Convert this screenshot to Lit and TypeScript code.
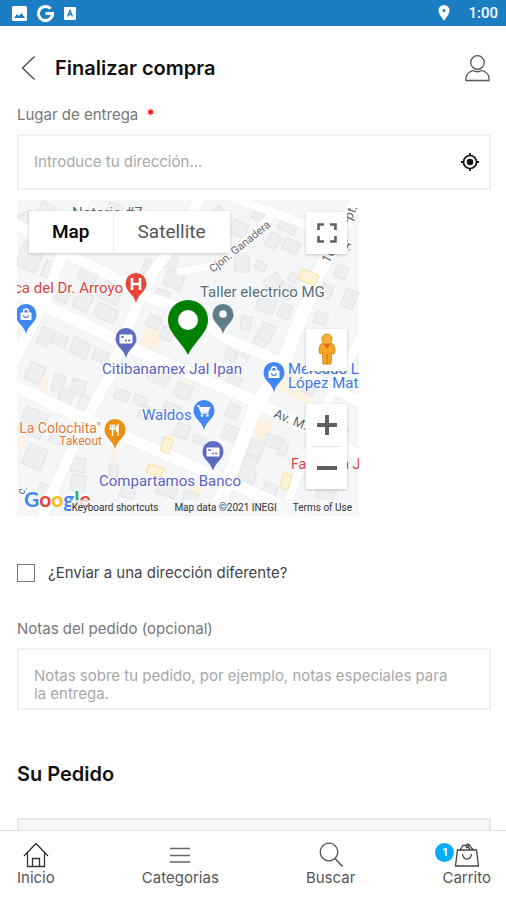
import { LitElement, html, svg, css } from "lit";
import { customElement } from "lit/decorators.js";

const ROADS: [string, number][] = [
  ["M70 -5 L43 60 L26 105 L-5 165", 11],
  ["M-5 90 L60 121 L126 153 L235 200 L347 258", 12],
  ["M-5 22 L50 54 L93 75 L126 95 L173 112 L208 138 L268 164 L347 204", 11],
  ["M185 -5 L160 40 L136 72 L120 105 L103 148 L93 175 L70 218 L34 295 L24 322", 11],
  ["M-5 185 L66 218 L173 265 L248 298 L300 322", 12],
  ["M345 -8 L301 75 L268 158 L238 208 L196 320", 14],
  ["M160 72 L200 65 L222 48 L258 12", 8],
  ["M205 -6 L288 24 L330 30", 9],
  ["M347 130 L328 168 L311 202 L278 282 L264 322", 9],
];

// x, y, width, height, rotation
const BLOCKS: [number, number, number, number, number][] = [
  [4, 12, 14, 18, -25], [22, 4, 16, 12, 25], [2, 44, 22, 26, 25], [26, 62, 12, 16, 25],
  [62, 68, 18, 14, 25], [84, 84, 20, 18, 25], [58, 92, 16, 18, 25], [40, 88, 12, 14, 25],
  [78, 106, 22, 14, 25], [36, 134, 14, 12, 25], [54, 140, 18, 16, 25], [22, 128, 12, 18, 25],
  [76, 150, 14, 12, 25], [10, 164, 16, 18, 25], [36, 174, 11, 18, 15], [54, 180, 14, 14, 15],
  [42, 190, 14, 14, 20], [62, 196, 12, 15, 20], [4, 210, 24, 26, 22], [34, 226, 14, 18, 22],
  [8, 246, 20, 22, 22], [54, 258, 14, 14, 8], [54, 275, 14, 16, 8], [20, 284, 12, 20, 22],
  [144, 56, 16, 12, 20], [148, 72, 18, 16, 20], [138, 90, 14, 12, 20], [126, 60, 10, 14, 20],
  [110, 10, 20, 14, 25], [130, 20, 16, 14, 25], [90, 4, 14, 12, 25],
  [196, 8, 12, 12, 45], [214, 22, 16, 14, 25], [236, 12, 10, 9, 35], [262, 20, 18, 12, 25],
  [266, 40, 16, 12, 25], [250, 34, 12, 14, 35], [218, 56, 14, 16, 0], [238, 62, 11, 8, 30],
  [248, 76, 16, 12, -35], [272, 74, 8, 8, 30], [240, 96, 18, 16, 20], [262, 84, 14, 14, 30],
  [224, 116, 10, 14, 12], [242, 124, 14, 18, 25], [262, 104, 12, 14, 25], [236, 138, 12, 12, 25],
  [208, 150, 12, 10, 25], [226, 146, 8, 12, 25], [303, 84, 12, 14, 20], [318, 66, 12, 12, 20],
  [310, 42, 14, 12, 20], [326, 90, 13, 18, 20], [298, 112, 12, 12, 20],
  [130, 116, 14, 12, 25], [144, 128, 12, 12, 25], [132, 170, 20, 14, 25], [158, 184, 16, 14, 25],
  [98, 190, 14, 10, 20], [116, 196, 14, 10, 20], [122, 206, 12, 14, 20], [146, 204, 16, 12, 20],
  [158, 224, 14, 14, 20], [210, 204, 12, 14, 25], [206, 226, 14, 14, 25], [176, 236, 12, 8, 20],
  [92, 264, 9, 12, 5], [104, 284, 14, 14, 20], [140, 282, 20, 14, 20], [166, 292, 14, 14, 20],
  [232, 240, 14, 16, 20], [248, 236, 18, 12, 20], [262, 242, 8, 14, 20], [226, 256, 14, 12, 20],
  [222, 270, 16, 14, 20], [246, 284, 14, 12, 20], [286, 262, 14, 18, 20], [300, 286, 18, 14, 20],
  [318, 226, 12, 14, 20], [320, 182, 14, 14, 20], [286, 184, 12, 10, 20], [210, 176, 14, 10, 25],
];

const WARM: [number, number, number, number, number][] = [
  [124, 60, 14, 20, 25], [124, 128, 18, 26, 25], [22, 176, 8, 14, 15], [120, 10, 12, 18, 25],
  [252, 170, 48, 26, 25], [162, 180, 14, 18, 20], [236, 218, 18, 20, 20], [94, 246, 6, 16, 5],
  [182, 160, 12, 12, 25], [264, 272, 9, 14, 15], [146, 234, 10, 14, 20], [130, 264, 18, 12, 15],
  [282, 72, 14, 10, 25], [172, 286, 14, 10, 25], [210, 206, 12, 12, 20], [0, 236, 8, 12, 20],
];

const pin = (x: number, y: number, fill: string, glyph: unknown) => svg`
  <g transform="translate(${x} ${y})">
    <path d="M0 19 C-2 10 -10.500 8 -10.500 -0.500 A10.500 10.500 0 0 1 10.500 -0.500 C10.500 8 2 10 0 19Z" fill=${fill} />
    ${glyph}
  </g>`;

const bag = svg`<path d="M-5.500 -2.500 H5.500 V5 H-5.500Z" fill="#fff"/><path d="M-2.500 -2 V-3.500 A2.500 2.500 0 0 1 2.500 -3.500 V-2" fill="none" stroke="#fff" stroke-width="1.500"/><path d="M-2.500 0 A2.500 2.500 0 0 0 2.500 0" fill="none" stroke="#4285f4" stroke-width="1.200"/>`;
const card = svg`<rect x="-6.500" y="-4.500" width="13" height="9" rx="1" fill="#fff"/><path d="M-5 -2 H-2 M-1 1.500 H1 M2 1.500 H4.500" stroke="#5c6bc0" stroke-width="1.500"/>`;
const cart = svg`<path d="M-7 -5 H-5 L-2.500 2 H4.500" fill="none" stroke="#fff" stroke-width="1.500"/><path d="M-5 -4 H6.500 L4.500 1 H-3Z" fill="#fff"/><circle cx="-2" cy="4.500" r="1.300" fill="#fff"/><circle cx="3.500" cy="4.500" r="1.300" fill="#fff"/>`;
const fork = svg`<path d="M-4.500 -5.500 V-1 H-0.500 V-5.500 M-2.500 -5.500 V6 M3 6 V-5 Q1 -3 1.500 1 H3" fill="none" stroke="#fff" stroke-width="1.500"/>`;
const hospital = svg`<path d="M-4 -6 V6 M4 -6 V6 M-4 0 H4" stroke="#fff" stroke-width="2.600"/>`;
const dot = svg`<circle r="3.800" cy="-1" fill="#fff"/>`;

@customElement("delivery-map")
export class DeliveryMap extends LitElement {
  static styles = css`
    :host { display: block; position: relative; overflow: hidden; width: 342px; max-width: 100%; font-family: Roboto, sans-serif; }
    .canvas { display: block; width: 100%; height: auto; }
    .halo { paint-order: stroke; stroke: #fff; stroke-width: 2px; stroke-opacity: 0.8; }
    button { border: 0; padding: 0; margin: 0; background: #fff; font: inherit; }
    .types { position: absolute; top: 11px; left: 12px; display: flex; box-shadow: 0 1px 3px rgba(0, 0, 0, 0.2); }
    .types button { height: 42px; padding: 0 24px; font-size: 19px; color: #565656; }
    .types button.on { padding: 0 23px; font-weight: 500; color: #000; border-right: 1px solid #ececec; }
    .tool { position: absolute; right: 12px; width: 41px; display: grid; place-items: center; box-shadow: 0 1px 3px rgba(0, 0, 0, 0.2); }
    .full { top: 12px; height: 42px; }
    .person { top: 129px; height: 42px; }
    .zoom { position: absolute; right: 12px; bottom: 27px; width: 41px; background: #fff; box-shadow: 0 1px 3px rgba(0, 0, 0, 0.2); display: flex; flex-direction: column; }
    .zoom button { height: 42px; display: grid; place-items: center; }
    .zoom hr { border: 0; height: 1px; width: 31px; margin: 0 5px; background: #e6e6e6; }
    .legal { position: absolute; right: 0; bottom: 0; display: flex; align-items: center; height: 16px; padding: 0 7px 0 1px; gap: 16px; font-size: 10px; line-height: 16px; color: #333; background: rgba(245, 246, 247, 0.8); white-space: nowrap; }
    .legal a { color: inherit; text-decoration: none; }
  `;

  render() {
    return html`
      <svg class="canvas" viewBox="0 0 342 316" role="img" aria-label="Mapa de entrega">
        <rect width="342" height="316" fill="#f5f6f8" />
        ${WARM.map(([x, y, w, h, r]) => svg`<rect x=${x} y=${y} width=${w} height=${h} fill="#fdf2e2" transform="rotate(${r} ${x + w / 2} ${y + h / 2})"/>`)}
        ${BLOCKS.map(([x, y, w, h, r]) => svg`<rect x=${x} y=${y} width=${w} height=${h} fill="#eeeff1" stroke="#e1e3e6" transform="rotate(${r} ${x + w / 2} ${y + h / 2})"/>`)}
        ${ROADS.map(([d, w]) => svg`<path d=${d} fill="none" stroke="#e8eaed" stroke-width=${w + 1}/>`)}
        ${ROADS.map(([d, w]) => svg`<path d=${d} fill="none" stroke="#fff" stroke-width=${w}/>`)}
        <g fill="#fff3d6" stroke="#f7dfa4">
          <path d="M285 68 L302 76 L298 86 L281 79Z M147 237 L156 240 L152 254 L143 250Z M132 264 L147 269 L143 277 L129 272Z M267 273 L275 276 L271 290 L263 287Z" />
        </g>
        <g class="halo" font-size="11" fill="#5f6368">
          <text x="196" y="73" transform="rotate(-39 196 73)">Cjon. Ganadera</text>
          <text x="312" y="64" transform="rotate(-62 312 64)" font-size="13">16</text>
          <text x="333" y="24" transform="rotate(-66 333 24)" font-size="13">-pt.</text>
          <text x="325" y="47" transform="rotate(25 325 47)" font-size="12">Ir.</text>
          <text x="256" y="217" transform="rotate(22 256 217)" font-size="13">Av. M.</text>
          <text x="4" y="292" transform="rotate(-60 8 292)">c.</text>
        </g>
        <g class="halo" font-size="15">
          <text x="55" y="18" fill="#546e7a">Notaria #7</text>
          <text x="106" y="93" fill="#d6453d" text-anchor="end">ca del Dr. Arroyo</text>
          <text x="183" y="97" fill="#546e7a">Taller electrico MG</text>
          <text x="85" y="174" fill="#5c5fc4">Citibanamex Jal Ipan</text>
          <text x="271" y="174" fill="#3b78e7">Mercado L</text>
          <text x="271" y="188" fill="#3b78e7">López Mate</text>
          <text x="125" y="220" fill="#3b78e7">Waldos</text>
          <text x="84" y="233" fill="#e07a3a" text-anchor="end" font-size="14">La Colochita"</text>
          <text x="85" y="245" fill="#e07a3a" font-size="12" text-anchor="end">Takeout</text>
          <text x="82" y="286" fill="#5c5fc4">Compartamos Banco</text>
          <text x="274" y="269" fill="#d6453d" font-size="14">Farmacia J</text>
        </g>
        ${pin(119, 84, "#e8453c", hospital)}
        ${pin(9, 115, "#4285f4", bag)}
        ${pin(109, 139, "#5c6bc0", card)}
        ${pin(206, 115, "#607d8b", dot)}
        ${pin(257, 173, "#4285f4", bag)}
        ${pin(187, 211, "#4285f4", cart)}
        ${pin(196, 252, "#5c6bc0", card)}
        ${pin(98, 230, "#ef8e0c", fork)}
        <path d="M171 155 C165 142 151 133 151 120 A20 20 0 0 1 191 120 C191 133 177 142 171 155Z" fill="#008000" />
        <circle cx="171" cy="120" r="10" fill="#fff" />
        <g font-family="Lato, sans-serif" font-size="21" font-weight="700" class="halo">
          <text x="7" y="307"><tspan fill="#4285f4">G</tspan><tspan fill="#ea4335">o</tspan><tspan fill="#fbbc05">o</tspan><tspan fill="#4285f4">g</tspan><tspan fill="#34a853">l</tspan><tspan fill="#ea4335">e</tspan></text>
        </g>
      </svg>
      <div class="types"><button class="on">Map</button><button>Satellite</button></div>
      <button class="tool full" aria-label="Pantalla completa">
        <svg width="20" height="20" viewBox="0 0 20 20"><path d="M1.500 7 V1.500 H7 M13 1.500 H18.500 V7 M18.500 13 V18.500 H13 M7 18.500 H1.500 V13" fill="none" stroke="#606060" stroke-width="2.600" /></svg>
      </button>
      <button class="tool person" aria-label="Street View">
        <svg width="22" height="34" viewBox="0 0 22 34"><path d="M7 10 H15 Q19 11 19 18 L18 21 L15.500 20 L15 31 H7 L6.500 20 L4 21 L3 18 Q3 11 7 10Z" fill="#f5a623" stroke="#d98b16" /><circle cx="11" cy="6" r="5" fill="#f9b233" stroke="#d98b16" /><path d="M7.500 11 L11 16 L14.500 11Z" fill="#e2632a" /><path d="M11 21 V31" stroke="#c77c12" /></svg>
      </button>
      <div class="zoom">
        <button aria-label="Acercar"><svg width="20" height="20"><path d="M0 10 H20 M10 0 V20" stroke="#606060" stroke-width="4" /></svg></button>
        <hr />
        <button aria-label="Alejar"><svg width="20" height="20"><path d="M0 10 H20" stroke="#606060" stroke-width="4" /></svg></button>
      </div>
      <div class="legal"><a href="#">Keyboard shortcuts</a><span>Map data ©2021 INEGI</span><a href="#">Terms of Use</a></div>
    `;
  }
}

@customElement("app-root")
export class AppRoot extends LitElement {
  static styles = css`
    :host { display: flex; flex-direction: column; height: 100vh; background: #fff; color: #111; font-family: Inter, "Open Sans", sans-serif; font-size: 15px; line-height: 18px; }
    * { box-sizing: border-box; }
    button { border: 0; padding: 0; background: none; font: inherit; color: inherit; }
    svg { display: block; }
    .status { flex: none; display: flex; align-items: center; gap: 10px; height: 26px; padding: 0 8px 0 12px; background: #1b7ec3; color: #fff; }
    .clock { margin-left: 8px; font: 500 15px/20px Roboto, sans-serif; }
    .spacer { flex: 1; }
    header { flex: none; display: flex; align-items: center; height: 80px; padding: 4px 16px 0 21px; gap: 19px; }
    h1 { flex: 1; margin: 0; font-size: 20px; line-height: 24px; font-weight: 600; }
    main { flex: 1; min-height: 0; overflow-y: auto; scrollbar-width: none; padding: 0 15px 0 17px; }
    .label { display: block; color: #777; }
    .req { color: #f00; margin-left: 4px; font-weight: 700; }
    .field { display: flex; align-items: center; height: 56px; margin: 10px 0; padding: 0 10px 0 15px; border: 2px solid #f0f0f0; }
    input[type="text"] { flex: 1; min-width: 0; border: 0; padding: 0; outline: 0; background: none; font: inherit; color: #333; }
    ::placeholder { color: #a8a8a8; opacity: 1; }
    .other { display: flex; align-items: center; gap: 13px; margin: 48px 0 38px; color: #444; }
    .other input { appearance: none; width: 18px; height: 18px; margin: 0; border: 1px solid #777; background: #fff; }
    textarea { display: block; width: 100%; height: 62px; margin: 10px 0 52px; padding: 17px 32px 0 15px; border: 2px solid #f0f0f0; resize: none; outline: 0; overflow: hidden; font: inherit; background: none; }
    h2 { margin: 0 0 32px; font-size: 20px; line-height: 24px; font-weight: 600; }
    .order { height: 120px; border: 2px solid #e8e8e8; border-radius: 2px; background: #f7f7f7; }
    nav { flex: none; display: flex; justify-content: space-between; height: 70px; padding: 11px 15px 0 17px; border-top: 1px solid #e2e2e2; background: #fff; }
    nav a { display: flex; flex-direction: column; align-items: center; gap: 1px; color: #555; text-decoration: none; }
    .cart { position: relative; }
    .badge { position: absolute; left: -7px; top: 1px; width: 19px; height: 19px; border-radius: 50%; background: #05abf8; color: #fff; font-size: 11px; line-height: 19px; font-weight: 700; text-align: center; }
  `;

  render() {
    return html`
      <div class="status">
        <svg width="15" height="15" viewBox="0 0 15 15"><rect width="15" height="15" rx="1.500" fill="#fff" /><path d="M2 12 L5 8 L7 10 L9.500 7 L13 12Z" fill="#1b7ec3" /></svg>
        <svg width="17" height="17" viewBox="0 0 17 17"><path d="M13.700 3.800 A7 7 0 1 0 15.500 8.500 H8.500" fill="none" stroke="#fff" stroke-width="3" /></svg>
        <svg width="12" height="13" viewBox="0 0 12 13"><rect width="12" height="13" rx="1" fill="#fff" /><path d="M3.500 9.500 L6 3.500 L8.500 9.500 M4.500 7.500 H7.500" fill="none" stroke="#1b7ec3" stroke-width="1.300" /></svg>
        <span class="spacer"></span>
        <svg width="12" height="16" viewBox="0 0 12 16"><path d="M6 16 C3 11 0.500 9 0.500 5.500 A5.500 5.500 0 0 1 11.500 5.500 C11.500 9 9 11 6 16Z" fill="#fff" /><circle cx="6" cy="5.500" r="1.500" fill="#1b7ec3" /></svg>
        <span class="clock">1:00</span>
      </div>
      <header>
        <button aria-label="Volver"><svg width="15" height="24" viewBox="0 0 15 24"><path d="M13.500 0.500 L1.500 12 L13.500 23.500" fill="none" stroke="#444" stroke-width="1.300" /></svg></button>
        <h1>Finalizar compra</h1>
        <button aria-label="Mi cuenta"><svg width="25" height="27" viewBox="0 0 25 27"><circle cx="12.500" cy="7.500" r="6.800" fill="none" stroke="#555" stroke-width="1.300" /><path d="M1 25.500 V22.500 C1.500 18.500 5 16.500 8 15.500 Q12.500 18 17 15.500 C20 16.500 23.500 18.500 24 22.500 V25.500Z" fill="none" stroke="#555" stroke-width="1.300" /></svg></button>
      </header>
      <main>
        <label class="label" for="place">Lugar de entrega <span class="req">*</span></label>
        <div class="field">
          <input id="place" type="text" placeholder="Introduce tu dirección..." />
          <button aria-label="Usar mi ubicación"><svg width="18" height="18" viewBox="0 0 18 18"><circle cx="9" cy="9" r="6.500" fill="none" stroke="#111" stroke-width="1.700" /><circle cx="9" cy="9" r="3.200" fill="#111" /><path d="M9 0 V3 M9 15 V18 M0 9 H3 M15 9 H18" stroke="#111" stroke-width="1.800" /></svg></button>
        </div>
        <delivery-map></delivery-map>
        <label class="other"><input type="checkbox" /><span>¿Enviar a una dirección diferente?</span></label>
        <label class="label" for="notes">Notas del pedido (opcional)</label>
        <textarea id="notes" placeholder="Notas sobre tu pedido, por ejemplo, notas especiales para la entrega."></textarea>
        <h2>Su Pedido</h2>
        <section class="order"></section>
      </main>
      <nav>
        <a href="#"><svg width="26" height="26" viewBox="0 0 26 26"><path d="M1 14 L13 1.500 L25 14 M4.500 11 V24.500 H21.500 V11 M9.500 24.500 V16.500 H16.500 V24.500" fill="none" stroke="#333" stroke-width="1.300" /></svg><span>Inicio</span></a>
        <a href="#"><svg width="26" height="26" viewBox="0 0 26 26"><path d="M3 6.500 H23 M3 13.500 H23 M3 20 H23" stroke="#666" stroke-width="1.500" /></svg><span>Categorias</span></a>
        <a href="#"><svg width="26" height="26" viewBox="0 0 26 26"><circle cx="11" cy="10" r="8.800" fill="none" stroke="#555" stroke-width="1.300" /><path d="M17 16.500 L24.500 24.500" stroke="#555" stroke-width="1.500" /></svg><span>Buscar</span></a>
        <a href="#" class="cart"><svg width="26" height="26" viewBox="0 0 26 26"><path d="M3.500 8 H22.500 L24.500 24 H1.500Z M6 8 L9 3.500 H12 L16 7 M11 3.500 L14 2 L19 7.500 M12 6 L16 2.500 M8.500 12 Q9 17 13 17 Q17 17 17.500 12" fill="none" stroke="#444" stroke-width="1.300" /></svg><span class="badge">1</span><span>Carrito</span></a>
      </nav>
    `;
  }
}
